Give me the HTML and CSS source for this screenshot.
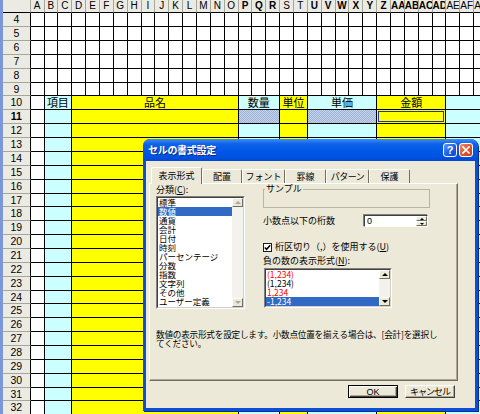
FILE: index.html
```html
<!DOCTYPE html>
<html lang="ja">
<head>
<meta charset="utf-8">
<title>セルの書式設定</title>
<link rel="stylesheet" href="styles.css">
</head>
<body>
<div class="sheet">
<div class="frame"></div>
<div class="ch"></div>
<div class="ch">A</div><div class="ch">B</div><div class="ch">C</div><div class="ch">D</div><div class="ch">E</div><div class="ch">F</div><div class="ch">G</div><div class="ch">H</div><div class="ch">I</div><div class="ch">J</div><div class="ch">K</div><div class="ch">L</div><div class="ch">M</div><div class="ch">N</div><div class="ch">O</div><div class="ch b">P</div><div class="ch b">Q</div><div class="ch b">R</div><div class="ch">S</div><div class="ch">T</div><div class="ch b">U</div><div class="ch b">V</div><div class="ch b">W</div><div class="ch b">X</div><div class="ch b">Y</div><div class="ch b">Z</div><div class="ch b">AA</div><div class="ch b">AB</div><div class="ch b">AC</div><div class="ch b">AD</div><div class="ch">AE</div><div class="ch">AF</div><div class="ch">AG</div>

<div class="rh">4</div><i></i><i></i><i></i><i></i><i></i><i></i><i></i><i></i><i></i><i></i><i></i><i></i><i></i><i></i><i></i><i></i><i></i><i></i><i></i><i></i><i></i><i></i><i></i><i></i><i></i><i></i><i></i><i></i><i></i><i></i><i></i><i></i><i></i>
<div class="rh">5</div><i></i><i></i><i></i><i></i><i></i><i></i><i></i><i></i><i></i><i></i><i></i><i></i><i></i><i></i><i></i><i></i><i></i><i></i><i></i><i></i><i></i><i></i><i></i><i></i><i></i><i></i><i></i><i></i><i></i><i></i><i></i><i></i><i></i>
<div class="rh">6</div><i></i><i></i><i></i><i></i><i></i><i></i><i></i><i></i><i></i><i></i><i></i><i></i><i></i><i></i><i></i><i></i><i></i><i></i><i></i><i></i><i></i><i></i><i></i><i></i><i></i><i></i><i></i><i></i><i></i><i></i><i></i><i></i><i></i>
<div class="rh">7</div><i></i><i></i><i></i><i></i><i></i><i></i><i></i><i></i><i></i><i></i><i></i><i></i><i></i><i></i><i></i><i></i><i></i><i></i><i></i><i></i><i></i><i></i><i></i><i></i><i></i><i></i><i></i><i></i><i></i><i></i><i></i><i></i><i></i>
<div class="rh">8</div><i></i><i></i><i></i><i></i><i></i><i></i><i></i><i></i><i></i><i></i><i></i><i></i><i></i><i></i><i></i><i></i><i></i><i></i><i></i><i></i><i></i><i></i><i></i><i></i><i></i><i></i><i></i><i></i><i></i><i></i><i></i><i></i><i></i>
<div class="rh">9</div><i></i><i></i><i></i><i></i><i></i><i></i><i></i><i></i><i></i><i></i><i></i><i></i><i></i><i></i><i></i><i></i><i></i><i></i><i></i><i></i><i></i><i></i><i></i><i></i><i></i><i></i><i></i><i></i><i></i><i></i><i></i><i></i><i></i>

<div class="rh">10</div><i></i><div class="cy s2 t">項目</div><div class="ye s12 t">品名</div><div class="cy s3 t">数量</div><div class="ye s2 t">単位</div><div class="cy s5 t">単価</div><div class="ye s5 t">金額</div><div class="cy s3"></div>
<div class="rh b">11</div><i></i><div class="cy s2"></div><div class="ye s12"></div><div class="sel s3"></div><div class="ye s2"></div><div class="sel s5"></div><div class="ye s5 act"></div><div class="cy s3"></div>
<div class="rh">12</div><i></i><div class="cy s2"></div><div class="ye s12"></div><div class="cy s3"></div><div class="ye s2"></div><div class="cy s5"></div><div class="ye s5"></div><div class="cy s3"></div>
<div class="rh">13</div><i></i><div class="cy s2"></div><div class="ye s12"></div><div class="cy s3"></div><div class="ye s2"></div><div class="cy s5"></div><div class="ye s5"></div><div class="cy s3"></div>
<div class="rh">14</div><i></i><div class="cy s2"></div><div class="ye s12"></div><div class="cy s3"></div><div class="ye s2"></div><div class="cy s5"></div><div class="ye s5"></div><div class="cy s3"></div>
<div class="rh">15</div><i></i><div class="cy s2"></div><div class="ye s12"></div><div class="cy s3"></div><div class="ye s2"></div><div class="cy s5"></div><div class="ye s5"></div><div class="cy s3"></div>
<div class="rh">16</div><i></i><div class="cy s2"></div><div class="ye s12"></div><div class="cy s3"></div><div class="ye s2"></div><div class="cy s5"></div><div class="ye s5"></div><div class="cy s3"></div>
<div class="rh">17</div><i></i><div class="cy s2"></div><div class="ye s12"></div><div class="cy s3"></div><div class="ye s2"></div><div class="cy s5"></div><div class="ye s5"></div><div class="cy s3"></div>
<div class="rh">18</div><i></i><div class="cy s2"></div><div class="ye s12"></div><div class="cy s3"></div><div class="ye s2"></div><div class="cy s5"></div><div class="ye s5"></div><div class="cy s3"></div>
<div class="rh">19</div><i></i><div class="cy s2"></div><div class="ye s12"></div><div class="cy s3"></div><div class="ye s2"></div><div class="cy s5"></div><div class="ye s5"></div><div class="cy s3"></div>
<div class="rh">20</div><i></i><div class="cy s2"></div><div class="ye s12"></div><div class="cy s3"></div><div class="ye s2"></div><div class="cy s5"></div><div class="ye s5"></div><div class="cy s3"></div>
<div class="rh">21</div><i></i><div class="cy s2"></div><div class="ye s12"></div><div class="cy s3"></div><div class="ye s2"></div><div class="cy s5"></div><div class="ye s5"></div><div class="cy s3"></div>
<div class="rh">22</div><i></i><div class="cy s2"></div><div class="ye s12"></div><div class="cy s3"></div><div class="ye s2"></div><div class="cy s5"></div><div class="ye s5"></div><div class="cy s3"></div>
<div class="rh">23</div><i></i><div class="cy s2"></div><div class="ye s12"></div><div class="cy s3"></div><div class="ye s2"></div><div class="cy s5"></div><div class="ye s5"></div><div class="cy s3"></div>
<div class="rh">24</div><i></i><div class="cy s2"></div><div class="ye s12"></div><div class="cy s3"></div><div class="ye s2"></div><div class="cy s5"></div><div class="ye s5"></div><div class="cy s3"></div>
<div class="rh">25</div><i></i><div class="cy s2"></div><div class="ye s12"></div><div class="cy s3"></div><div class="ye s2"></div><div class="cy s5"></div><div class="ye s5"></div><div class="cy s3"></div>
<div class="rh">26</div><i></i><div class="cy s2"></div><div class="ye s12"></div><div class="cy s3"></div><div class="ye s2"></div><div class="cy s5"></div><div class="ye s5"></div><div class="cy s3"></div>
<div class="rh">27</div><i></i><div class="cy s2"></div><div class="ye s12"></div><div class="cy s3"></div><div class="ye s2"></div><div class="cy s5"></div><div class="ye s5"></div><div class="cy s3"></div>
<div class="rh">28</div><i></i><div class="cy s2"></div><div class="ye s12"></div><div class="cy s3"></div><div class="ye s2"></div><div class="cy s5"></div><div class="ye s5"></div><div class="cy s3"></div>
<div class="rh">29</div><i></i><div class="cy s2"></div><div class="ye s12"></div><div class="cy s3"></div><div class="ye s2"></div><div class="cy s5"></div><div class="ye s5"></div><div class="cy s3"></div>
<div class="rh">30</div><i></i><div class="cy s2"></div><div class="ye s12"></div><div class="cy s3"></div><div class="ye s2"></div><div class="cy s5"></div><div class="ye s5"></div><div class="cy s3"></div>
<div class="rh">31</div><i></i><div class="cy s2"></div><div class="ye s12"></div><div class="cy s3"></div><div class="ye s2"></div><div class="cy s5"></div><div class="ye s5"></div><div class="cy s3"></div>
<div class="rh">32</div><i></i><div class="cy s2"></div><div class="ye s12"></div><div class="cy s3"></div><div class="ye s2"></div><div class="cy s5"></div><div class="ye s5"></div><div class="cy s3"></div>
</div>

<div class="dlg">
  <div class="titlebar">
    <span class="ttl">セルの書式設定</span>
    <span class="tbtns">
      <span class="tb help">?</span>
      <span class="tb close"><svg width="8" height="8" viewBox="0 0 8 8"><path d="M1 1L7 7M7 1L1 7" stroke="#fff" stroke-width="1.7" stroke-linecap="square"/></svg></span>
    </span>
  </div>
  <div class="dbody">
    <div class="tabs">
      <span class="tab on">表示形式</span><span class="tab">配置</span><span class="tab">フォント</span><span class="tab">罫線</span><span class="tab">パターン</span><span class="tab">保護</span>
    </div>
    <div class="panel">
      <div class="cols">
        <div class="lcol">
          <div class="lbl">分類(<u>C</u>):</div>
          <div class="lb cat">
            <div class="lbi">
              <ul class="items">
                <li>標準</li><li class="on">数値</li><li>通貨</li><li>会計</li><li>日付</li><li>時刻</li><li>パーセンテージ</li><li>分数</li><li>指数</li><li>文字列</li><li>その他</li><li>ユーザー定義</li>
              </ul>
              <div class="vs"><span class="sbtn up dis"></span><span class="trk"></span><span class="sbtn dn dis"></span></div>
            </div>
          </div>
        </div>
        <div class="rcol">
          <fieldset class="grp"><legend>サンプル</legend><div class="grp-in"></div></fieldset>
          <div class="dec">
            <span class="dl">小数点以下の桁数</span>
            <span class="spin"><span class="sv">0</span><span class="sp"><i class="su"></i><i class="sd"></i></span></span>
          </div>
          <div class="chk">
            <span class="cb"><svg width="7" height="7" viewBox="0 0 7 7"><path d="M0.8 3.4L2.6 5.3L6.2 1.2" fill="none" stroke="#000" stroke-width="1.5"/></svg></span>
            <span>桁区切り（,）を使用する(<u>U</u>)</span>
          </div>
          <div class="lbl nl">負の数の表示形式(<u>N</u>):</div>
          <div class="lb neg">
            <div class="lbi">
              <ul class="items">
                <li class="red">(1,234)</li><li>(1,234)</li><li class="red">1,234</li><li class="on">-1,234</li>
              </ul>
              <div class="vs"><span class="sbtn up"></span><span class="trk"></span><span class="sbtn dn"></span></div>
            </div>
          </div>
        </div>
      </div>
      <p class="desc">数値の表示形式を設定します。小数点位置を揃える場合は、[会計]を選択し<br>てください。</p>
    </div>
    <div class="btns"><span class="btn def">OK</span><span class="btn cancel">キャンセル</span></div>
  </div>
</div>
</body>
</html>
```

FILE: styles.css
```css
* { box-sizing: border-box; margin: 0; padding: 0; }
html, body { margin: 0; }
body {
  width: 480px;
  height: 414px;
  overflow: hidden;
  position: relative;
  background: #fff;
  font-family: "Noto Sans CJK JP", sans-serif;
}

/* ---------- spreadsheet ---------- */
.sheet {
  display: grid;
  grid-template-columns: 3px 27.67px repeat(33, 13.86px);
  grid-template-rows: 13.33px repeat(29, 13.87px);
  width: 480px;
  height: 414px;
  overflow: hidden;
}
.frame { grid-column: 1; grid-row: 1 / -1; background: #7b97d8; }
.ch {
  background: #ecebe3;
  border-right: 1px solid #a7a69a;
  border-bottom: 1px solid #000;
  font: 10px/12px "Liberation Sans", sans-serif;
  text-align: center;
  white-space: nowrap;
  overflow: hidden;
  color: #000;
}
.rh {
  background: #ecebe3;
  border-right: 1px solid #000;
  border-bottom: 1px solid #a7a69a;
  font: 10.5px/13px "Liberation Sans", sans-serif;
  text-align: center;
  color: #000;
}
.b { font-weight: bold; }
.sheet i, .cy, .ye, .sel {
  display: block;
  border-right: 1px solid #000;
  border-bottom: 1px solid #000;
}
.sheet i { background: #fff; }
.cy { background: #ccffff; }
.ye { background: #ffff00; }
.sel {
  background: repeating-conic-gradient(#9fb3d6 0 25%, #c4d3ec 0 50%) 0 0 / 2px 2px;
}
.act { box-shadow: inset 0 0 0 1px #ffff00, inset 0 0 0 2px #22379a; }
.s2 { grid-column: span 2; }
.s3 { grid-column: span 3; }
.s5 { grid-column: span 5; }
.s12 { grid-column: span 12; }
.t { font-size: 11px; line-height: 13px; text-align: center; white-space: nowrap; }

/* ---------- dialog ---------- */
.dlg {
  position: absolute;
  left: 143px;
  top: 139px;
  width: 335px;
  height: 272px;
  background: #0b4fd9;
  border-radius: 7px 7px 0 0;
  padding: 0 3px 3px;
  display: flex;
  flex-direction: column;
  font: 9px/10px "Noto Sans CJK JP", sans-serif;
  color: #000;
  box-shadow: 1px 1px 0 #082e94;
}
.titlebar {
  height: 22px;
  flex: none;
  margin: 0 -3px;
  padding: 0 5px 0 5px;
  display: flex;
  align-items: center;
  justify-content: space-between;
  border-radius: 7px 7px 0 0;
  background: linear-gradient(180deg, #3b8cf5 0, #2a7cf3 2px, #0d62ea 5px, #0058e6 12px, #0052e0 18px, #0048d4 22px);
}
.ttl {
  color: #fff;
  font-weight: bold;
  font-size: 10px;
  letter-spacing: -0.3px;
  text-shadow: 1px 1px 0 #0a2b8c;
}
.tbtns { display: flex; gap: 2px; }
.tb {
  width: 14px;
  height: 14px;
  border: 1px solid #fff;
  border-radius: 3px;
  display: flex;
  align-items: center;
  justify-content: center;
}
.help {
  background: linear-gradient(135deg, #5b97fb, #1a5ae6 60%, #1248c8);
  color: #fff;
  font: bold 11px/12px "Liberation Sans", sans-serif;
}
.close { background: linear-gradient(135deg, #f08a68, #e0552c 55%, #c23d18); }

.dbody {
  flex: 1;
  background: #ece9d8;
  padding: 6px 0 0 3px;
  display: flex;
  flex-direction: column;
}
.tabs {
  display: flex;
  align-items: flex-end;
  height: 16px;
  margin-left: 2px;
  position: relative;
  z-index: 1;
}
.tab {
  height: 14px;
  border: 1px solid #fff;
  border-bottom: 0;
  border-right-color: #716f64;
  border-radius: 2px 2px 0 0;
  background: #ece9d8;
  display: flex;
  align-items: center;
  justify-content: center;
  white-space: nowrap;
}
.tab.on { height: 17px; margin-bottom: -1px; width: 51px; }
.tab:nth-child(2) { width: 40px; }
.tab:nth-child(3) { width: 43px; }
.tab:nth-child(4) { width: 41px; }
.tab:nth-child(5) { width: 43px; letter-spacing: -0.5px; }
.tab:nth-child(6) { width: 41px; }

.panel {
  width: 309px;
  height: 198px;
  flex: none;
  border: 1px solid;
  border-color: #fff #716f64 #716f64 #fff;
  box-shadow: inset -1px -1px 0 #aca899;
  padding: 0 0 0 6px;
}
.cols {
  display: grid;
  grid-template-columns: 89px 167px;
  column-gap: 18px;
  align-items: start;
}
.lbl { height: 10px; white-space: nowrap; }
.lcol .lbl { margin-top: 1px; }
.lb {
  border: 1px solid;
  border-color: #808080 #fff #fff #808080;
  background: #fff;
}
.lbi {
  height: 100%;
  border: 1px solid;
  border-color: #404040 #d4d0c8 #d4d0c8 #404040;
  display: flex;
  overflow: hidden;
}
.cat { height: 113px; margin-top: 1px; }
.items { list-style: none; flex: 1; min-width: 0; font-size: 8.5px; }
.items li {
  height: 9px;
  line-height: 9px;
  padding-left: 1px;
  white-space: nowrap;
}
.items li.on { background: #316ac5; color: #fff; }
.items li.red { color: #ff0000; }
.vs {
  width: 11px;
  flex: none;
  display: flex;
  flex-direction: column;
  background: #f3f2ec;
}
.trk { flex: 1; }
.sbtn {
  height: 9px;
  flex: none;
  background: #ece9d8;
  border: 1px solid;
  border-color: #fff #716f64 #716f64 #fff;
  display: flex;
  align-items: center;
  justify-content: center;
}
.sbtn::after {
  content: "";
  border-left: 3px solid transparent;
  border-right: 3px solid transparent;
}
.up::after { border-bottom: 3px solid #000; }
.dn::after { border-top: 3px solid #000; }
.dis.up::after { border-bottom-color: #aca899; }
.dis.dn::after { border-top-color: #aca899; }

.grp {
  width: 167px;
  border: 1px solid #b8b5a6;
  padding: 0;
  margin: 0;
}
.grp legend { margin-left: 1px; padding: 0 1px; line-height: 10px; }
.grp-in { height: 13px; }

.dec {
  display: flex;
  align-items: center;
  margin-top: 7px;
  height: 12px;
}
.dl { width: 101px; white-space: nowrap; }
.spin {
  width: 64px;
  height: 12px;
  display: flex;
  background: #fff;
  border: 1px solid;
  border-color: #404040 #fff #fff #404040;
  box-shadow: -1px -1px 0 #808080;
}
.sv { flex: 1; padding-left: 2px; line-height: 10px; font-family: "Liberation Sans", sans-serif; }
.sp { width: 11px; display: flex; flex-direction: column; }
.sp i {
  flex: 1;
  background: #ece9d8;
  border: 1px solid;
  border-color: #fff #716f64 #716f64 #fff;
  display: flex;
  align-items: center;
  justify-content: center;
}
.sp i::after {
  content: "";
  border-left: 2px solid transparent;
  border-right: 2px solid transparent;
}
.su::after { border-bottom: 2px solid #000; }
.sd::after { border-top: 2px solid #000; }

.chk {
  display: flex;
  align-items: center;
  gap: 3px;
  margin-top: 15px;
  height: 10px;
  white-space: nowrap;
}
.cb {
  width: 9px;
  height: 9px;
  background: #fff;
  border: 1px solid #1c1c1c;
  display: flex;
  align-items: center;
  justify-content: center;
}
.nl { margin-top: 4px; }
.neg { width: 128px; height: 40px; margin: 2px 0 0 1px; }

.desc {
  margin-top: 21px;
  font-size: 8.6px;
  line-height: 9.4px;
  letter-spacing: -0.2px;
  white-space: nowrap;
}

.btns {
  width: 309px;
  display: flex;
  justify-content: flex-end;
  gap: 7px;
  padding-right: 3px;
  margin-top: 4px;
}
.btn {
  width: 50px;
  height: 13px;
  background: #ece9d8;
  border: 1px solid;
  border-color: #fff #404040 #404040 #fff;
  box-shadow: inset -1px -1px 0 #aca899;
  display: flex;
  align-items: center;
  justify-content: center;
  line-height: 10px;
  white-space: nowrap;
}
.btn.def {
  border-color: #000;
  box-shadow: inset 1px 1px 0 #fff, inset -1px -1px 0 #404040, inset -2px -2px 0 #aca899;
  font-family: "Liberation Sans", sans-serif;
}
.cancel { letter-spacing: -1px; }
```
